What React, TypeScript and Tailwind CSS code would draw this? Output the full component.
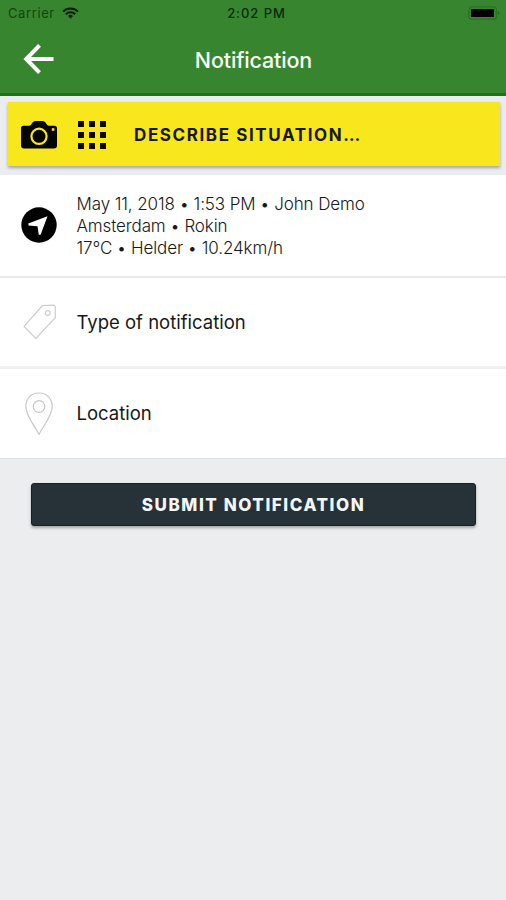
import type { ReactNode } from "react";

function StatusBar() {
  return (
    <div className="grid h-[26px] grid-cols-3 items-center pr-[6px] pl-2 text-[13px] leading-none">
      <div className="flex items-center gap-[7px]">
        <span className="tracking-[0.6px] text-[#17430f]">Carrier</span>
        <svg className="h-3 w-[17px]" viewBox="0 0 18 12" fill="none" stroke="#051c03" strokeWidth="2.1">
          <path d="M1.1 4.5a11.2 11.2 0 0 1 15.8 0M4 7.3a7.1 7.1 0 0 1 10 0" />
          <path d="M6.3 9.2a3.8 3.8 0 0 1 5.4 0L9 11.9z" fill="#051c03" stroke="none" />
        </svg>
      </div>
      <span className="pl-[5px] text-center font-medium tracking-[0.95px] whitespace-nowrap text-[#092b07]">2:02 PM</span>
      <svg className="h-[14px] w-[32px] justify-self-end" viewBox="0 0 32 14">
        <rect x=".8" y=".8" width="27.6" height="12.4" rx="3" fill="none" stroke="#2b7224" strokeWidth="1.3" />
        <rect x="3" y="3" width="23" height="8" rx=".6" fill="#000" />
        <path d="M30 5v4c1.6-.6 1.6-3.4 0-4" fill="#24671e" />
      </svg>
    </div>
  );
}

function CameraIcon() {
  return (
    <svg className="h-[28px] w-9" viewBox="0 0 36 28">
      <path d="M2.5 4.800H8q1.300 0 2-1l1.500-2.200Q12.500 0 14.500 0h7q2 0 3 1.600L26 3.800q.7 1 2 1h5.500Q36 4.800 36 7.300v17.200q0 3-3 3H3q-3 0-3-3V7.300Q0 4.800 2.500 4.800" fill="#050500" />
      <circle cx="18" cy="15.300" r="7.600" fill="none" stroke="#f8e71c" strokeWidth="2.200" />
      <rect x="30.800" y="7.200" width="2.600" height="2.600" fill="#f8e71c" />
    </svg>
  );
}

function GridIcon() {
  return (
    <div className="grid grid-cols-3 gap-[5px]">
      {Array.from({ length: 9 }, (_, i) => (
        <span key={i} className="size-[6px] bg-[#0b0a00]" />
      ))}
    </div>
  );
}

function LocateIcon() {
  return (
    <svg className="ml-px size-9" viewBox="0 0 36 36">
      <circle cx="18" cy="18" r="17.700" fill="#000" />
      <path d="M26.500 9.300 7.300 16.600l.2 1.800 9 .8 1.300 8.600h1.800z" fill="#fff" />
    </svg>
  );
}

function TagIcon() {
  return (
    <svg className="mt-px ml-[3px] h-9 w-[34px]" viewBox="0 0 34 36" fill="none" stroke="#cecece" strokeWidth="1.200" strokeLinejoin="round">
      <path d="M19.500 1.500 31 1.200l1.300 1.500v11L12.800 34.500 1 22.300z" />
      <circle cx="24.800" cy="9" r="2.300" />
    </svg>
  );
}

function PinIcon() {
  return (
    <svg className="mt-px ml-px h-[44px] w-7" viewBox="0 0 28 44" fill="none" stroke="#c8c8c8" strokeWidth="1.200" strokeLinejoin="round">
      <path d="M14 42.500C10 34 .8 24 .8 14.500.8 6 6.500 1 14 1s13.200 5 13.200 13.500C27.200 24 18 34 14 42.500z" />
      <circle cx="14" cy="14.500" r="5.800" />
    </svg>
  );
}

function Row({ icon, className, children }: { icon: ReactNode; className: string; children: ReactNode }) {
  return (
    <div className={`flex items-center bg-white ${className}`}>
      <div className="flex w-[76px] shrink-0 justify-center pb-px">{icon}</div>
      <div className="pl-[0.500px]">{children}</div>
    </div>
  );
}

export default function App() {
  return (
    <main className="flex h-[900px] w-full flex-col bg-[#ebedee] font-['Inter',sans-serif] text-[#171717]">
      <header className="flex h-24 flex-col border-b-[3px] border-[#187417] bg-[#38852f]">
        <StatusBar />
        <div className="grid flex-1 grid-cols-[1fr_auto_1fr] items-center">
          <svg className="mb-px ml-[23px] h-[30px] w-[31px]" viewBox="0 0 31 30" fill="none" stroke="#fff" strokeWidth="4">
            <path d="M16.500 1.400 3.200 15l13.300 13.600M3.500 15h27" />
          </svg>
          <h1 className="pt-[2px] pl-px text-[21.500px] font-medium tracking-[-0.150px] text-[#f7fff5]">Notification</h1>
        </div>
      </header>
      <section className="h-[79px] bg-[#ebecef] px-2 pt-[6px] pr-[6px]">
        <div className="flex h-16 items-center bg-[#f8e71c] pl-[13px] shadow-[0_2px_3px_rgba(0,0,0,0.3)]">
          <div className="pt-[2px]"><CameraIcon /></div>
          <div className="ml-[21px] pt-px"><GridIcon /></div>
          <span className="ml-7 pt-[3px] text-[17px] font-bold tracking-[1.600px]">DESCRIBE SITUATION…</span>
        </div>
      </section>
      <Row icon={<LocateIcon />} className="h-[103px] border-b-2 border-[#e7e7e7]">
        <p className="text-[17px] leading-[22px] font-light tracking-[-0.110px] whitespace-nowrap">
          May 11, 2018 • 1:53 PM • John Demo<br />Amsterdam • Rokin<br />17°C • Helder • 10.24km/h
        </p>
      </Row>
      <Row icon={<TagIcon />} className="h-[91px] border-b-[3px] border-[#f0f0f0]">
        <span className="block pt-[2px] text-[18.500px]">Type of notification</span>
      </Row>
      <Row icon={<PinIcon />} className="h-[90px] border-b border-[#dcdedf]">
        <span className="block text-[18.500px]">Location</span>
      </Row>
      <button className="mr-[30px] ml-[31px] mt-6 h-[43px] rounded-[3px] border border-[#10242b] bg-[#263238] pt-[2px] text-[17px] font-extrabold tracking-[1.550px] text-[#f4f7fa] shadow-[0_2px_3px_rgba(0,0,0,0.3)]">
        SUBMIT NOTIFICATION
      </button>
    </main>
  );
}
